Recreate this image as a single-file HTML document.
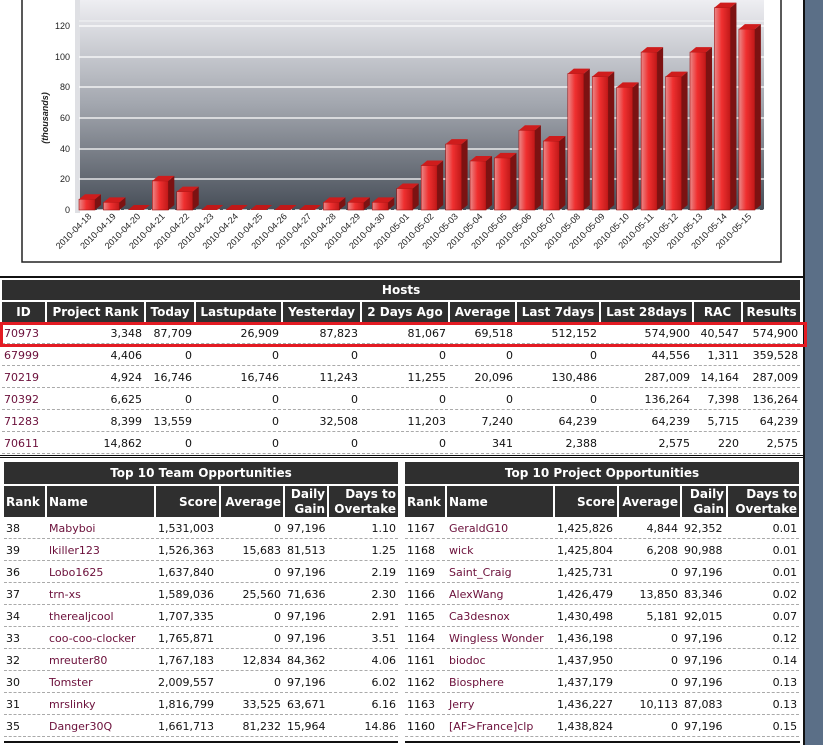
<!DOCTYPE html>
<html><head><meta charset="utf-8"><style>
body{margin:0;width:823px;height:745px;overflow:hidden;background:#fff;font-family:"DejaVu Sans","Liberation Sans",sans-serif;font-size:11px;color:#111;position:relative}
.side{position:absolute;left:803px;top:0;width:20px;height:745px;background:#5b6f87;border-left:2px solid #111}
table{position:absolute;border-collapse:separate;border-spacing:2px;table-layout:fixed}
td,th{padding:0 2px;white-space:nowrap;overflow:hidden}
th{background:#2f2f2f;color:#fff;font-weight:bold;font-size:12px}
td{height:19px;border-bottom:1px dashed #aaa;text-align:right;font-size:11px}
td.l{text-align:left}
a{color:#6b0f3a;text-decoration:none}
.hl{position:absolute;background:#111;height:2px}
</style></head><body>
<div class="side"></div>
<svg width="803" height="272" style="position:absolute;left:0;top:0" font-family="Liberation Sans,sans-serif">
<defs>
<linearGradient id="bg" x1="0" y1="0" x2="0" y2="1"><stop offset="0" stop-color="#eeeef2"/><stop offset="0.5" stop-color="#a2a6ae"/><stop offset="1" stop-color="#474e58"/></linearGradient>
<linearGradient id="fr" x1="0" y1="0" x2="1" y2="0"><stop offset="0" stop-color="#e98a8a"/><stop offset="0.45" stop-color="#f03030"/><stop offset="1" stop-color="#c01818"/></linearGradient>
</defs>
<rect x="22" y="-2" width="759" height="264" fill="#fff" stroke="#222" stroke-width="1.5"/>
<rect x="79" y="0" width="685" height="210" fill="url(#bg)"/>
<rect x="75" y="0" width="5" height="213" fill="#dfe0e4"/>
<g stroke="#fff" stroke-width="1.2">
<line x1="79" y1="21" x2="764" y2="21" stroke-opacity="0.5"/>
<line x1="79" y1="26" x2="764" y2="26"/><line x1="79" y1="57" x2="764" y2="57"/><line x1="79" y1="87" x2="764" y2="87"/><line x1="79" y1="118" x2="764" y2="118"/><line x1="79" y1="149" x2="764" y2="149"/><line x1="79" y1="179" x2="764" y2="179"/><line x1="79" y1="210" x2="764" y2="210" stroke-dasharray="6 3"/>
</g>
<g font-size="9" fill="#222" text-anchor="end">
<text x="70" y="29">120</text><text x="70" y="60">100</text><text x="70" y="90">80</text><text x="70" y="121">60</text><text x="70" y="152">40</text><text x="70" y="182">20</text><text x="70" y="213">0</text>
</g>
<text transform="translate(48,118) rotate(-90)" font-size="9" font-weight="bold" font-style="italic" text-anchor="middle" fill="#222">(thousands)</text>
<g id="bars"></g>
<g id="lbl" font-size="9" fill="#222" text-anchor="end"></g>
</svg>
<script>
var v=[7,5,0,19,12,0,0,0,0,0,5,5,5,14,29,43,32,34,52,45,89,87,80,103,87,103,132,118];
var b='',l='';
for(var i=0;i<28;i++){
 var x=79+i*24.44,h=v[i]*1.533,t=210-h,d=6,u=5;
 if(h<1){b+='<polygon points="'+x+',210 '+(x+16)+',210 '+(x+22)+','+(210-u)+' '+(x+6)+','+(210-u)+'" fill="#c01818"/>';}
 else{
 b+='<rect x="'+x+'" y="'+t+'" width="16" height="'+h+'" fill="url(#fr)" stroke="#a01010" stroke-width="0.6"/>';
 b+='<polygon points="'+(x+16)+','+t+' '+(x+16+d)+','+(t-u)+' '+(x+16+d)+','+(210-u)+' '+(x+16)+',210" fill="#7c1212"/>';
 b+='<polygon points="'+x+','+t+' '+(x+16)+','+t+' '+(x+16+d)+','+(t-u)+' '+(x+d)+','+(t-u)+'" fill="#cf1c1c"/>';}
 var dd=new Date(2010,3,18+i);var s='2010-'+String(dd.getMonth()+1).padStart(2,'0')+'-'+String(dd.getDate()).padStart(2,'0');
 l+='<text transform="translate('+(x+13)+',217) rotate(-45)">'+s+'</text>';
}
document.getElementById('bars').innerHTML=b;document.getElementById('lbl').innerHTML=l;
</script>
<div class="hl" style="left:0;top:276px;width:803px"></div>
<table style="left:0;top:278px;width:802px">
<colgroup><col style="width:43px"><col style="width:97px"><col style="width:48px"><col style="width:85px"><col style="width:77px"><col style="width:86px"><col style="width:65px"><col style="width:82px"><col style="width:91px"><col style="width:47px"><col style="width:57px"></colgroup>
<tr><th colspan="11" style="height:20px">Hosts</th></tr>
<tr><th style="height:20px">ID</th><th>Project Rank</th><th>Today</th><th>Lastupdate</th><th>Yesterday</th><th>2 Days Ago</th><th>Average</th><th>Last 7days</th><th>Last 28days</th><th>RAC</th><th>Results</th></tr>
<tr><td class="l"><a>70973</a></td><td>3,348</td><td>87,709</td><td>26,909</td><td>87,823</td><td>81,067</td><td>69,518</td><td>512,152</td><td>574,900</td><td>40,547</td><td>574,900</td></tr>
<tr><td class="l"><a>67999</a></td><td>4,406</td><td>0</td><td>0</td><td>0</td><td>0</td><td>0</td><td>0</td><td>44,556</td><td>1,311</td><td>359,528</td></tr>
<tr><td class="l"><a>70219</a></td><td>4,924</td><td>16,746</td><td>16,746</td><td>11,243</td><td>11,255</td><td>20,096</td><td>130,486</td><td>287,009</td><td>14,164</td><td>287,009</td></tr>
<tr><td class="l"><a>70392</a></td><td>6,625</td><td>0</td><td>0</td><td>0</td><td>0</td><td>0</td><td>0</td><td>136,264</td><td>7,398</td><td>136,264</td></tr>
<tr><td class="l"><a>71283</a></td><td>8,399</td><td>13,559</td><td>0</td><td>32,508</td><td>11,203</td><td>7,240</td><td>64,239</td><td>64,239</td><td>5,715</td><td>64,239</td></tr>
<tr><td class="l"><a>70611</a></td><td>14,862</td><td>0</td><td>0</td><td>0</td><td>0</td><td>341</td><td>2,388</td><td>2,575</td><td>220</td><td>2,575</td></tr>
</table>
<div style="position:absolute;left:0;top:322px;width:801px;height:19px;border:3px solid #e31b23"></div>
<div class="hl" style="left:0;top:455px;width:803px;height:1px"></div>
<div class="hl" style="left:0;top:457px;width:803px;height:1px"></div>
<table style="left:2px;top:460px;width:398px">
<colgroup><col style="width:41px"><col style="width:107px"><col style="width:63px"><col style="width:62px"><col style="width:42px"><col style="width:69px"></colgroup>
<tr><th colspan="6" style="height:22px">Top 10 Team Opportunities</th></tr>
<tr><th style="height:31px;text-align:left">Rank</th><th style="text-align:left">Name</th><th style="text-align:right">Score</th><th style="text-align:right">Average</th><th style="text-align:right;line-height:15px">Daily<br>Gain</th><th style="text-align:right;line-height:15px">Days to<br>Overtake</th></tr>
<tr><td class="l">38</td><td class="l"><a>Mabyboi</a></td><td class="l">1,531,003</td><td>0</td><td class="l">97,196</td><td>1.10</td></tr>
<tr><td class="l">39</td><td class="l"><a>lkiller123</a></td><td class="l">1,526,363</td><td>15,683</td><td class="l">81,513</td><td>1.25</td></tr>
<tr><td class="l">36</td><td class="l"><a>Lobo1625</a></td><td class="l">1,637,840</td><td>0</td><td class="l">97,196</td><td>2.19</td></tr>
<tr><td class="l">37</td><td class="l"><a>trn-xs</a></td><td class="l">1,589,036</td><td>25,560</td><td class="l">71,636</td><td>2.30</td></tr>
<tr><td class="l">34</td><td class="l"><a>therealjcool</a></td><td class="l">1,707,335</td><td>0</td><td class="l">97,196</td><td>2.91</td></tr>
<tr><td class="l">33</td><td class="l"><a>coo-coo-clocker</a></td><td class="l">1,765,871</td><td>0</td><td class="l">97,196</td><td>3.51</td></tr>
<tr><td class="l">32</td><td class="l"><a>mreuter80</a></td><td class="l">1,767,183</td><td>12,834</td><td class="l">84,362</td><td>4.06</td></tr>
<tr><td class="l">30</td><td class="l"><a>Tomster</a></td><td class="l">2,009,557</td><td>0</td><td class="l">97,196</td><td>6.02</td></tr>
<tr><td class="l">31</td><td class="l"><a>mrslinky</a></td><td class="l">1,816,799</td><td>33,525</td><td class="l">63,671</td><td>6.16</td></tr>
<tr><td class="l">35</td><td class="l"><a>Danger30Q</a></td><td class="l">1,661,713</td><td>81,232</td><td class="l">15,964</td><td>14.86</td></tr>
</table>
<table style="left:403px;top:460px;width:398px">
<colgroup><col style="width:40px"><col style="width:106px"><col style="width:62px"><col style="width:61px"><col style="width:44px"><col style="width:71px"></colgroup>
<tr><th colspan="6" style="height:22px">Top 10 Project Opportunities</th></tr>
<tr><th style="height:31px;text-align:left">Rank</th><th style="text-align:left">Name</th><th style="text-align:right">Score</th><th style="text-align:right">Average</th><th style="text-align:right;line-height:15px">Daily<br>Gain</th><th style="text-align:right;line-height:15px">Days to<br>Overtake</th></tr>
<tr><td class="l">1167</td><td class="l"><a>GeraldG10</a></td><td class="l">1,425,826</td><td>4,844</td><td class="l">92,352</td><td>0.01</td></tr>
<tr><td class="l">1168</td><td class="l"><a>wick</a></td><td class="l">1,425,804</td><td>6,208</td><td class="l">90,988</td><td>0.01</td></tr>
<tr><td class="l">1169</td><td class="l"><a>Saint_Craig</a></td><td class="l">1,425,731</td><td>0</td><td class="l">97,196</td><td>0.01</td></tr>
<tr><td class="l">1166</td><td class="l"><a>AlexWang</a></td><td class="l">1,426,479</td><td>13,850</td><td class="l">83,346</td><td>0.02</td></tr>
<tr><td class="l">1165</td><td class="l"><a>Ca3desnox</a></td><td class="l">1,430,498</td><td>5,181</td><td class="l">92,015</td><td>0.07</td></tr>
<tr><td class="l">1164</td><td class="l"><a>Wingless Wonder</a></td><td class="l">1,436,198</td><td>0</td><td class="l">97,196</td><td>0.12</td></tr>
<tr><td class="l">1161</td><td class="l"><a>biodoc</a></td><td class="l">1,437,950</td><td>0</td><td class="l">97,196</td><td>0.14</td></tr>
<tr><td class="l">1162</td><td class="l"><a>Biosphere</a></td><td class="l">1,437,179</td><td>0</td><td class="l">97,196</td><td>0.13</td></tr>
<tr><td class="l">1163</td><td class="l"><a>Jerry</a></td><td class="l">1,436,227</td><td>10,113</td><td class="l">87,083</td><td>0.13</td></tr>
<tr><td class="l">1160</td><td class="l"><a>[AF&gt;France]clp</a></td><td class="l">1,438,824</td><td>0</td><td class="l">97,196</td><td>0.15</td></tr>
</table>
<div class="hl" style="left:4px;top:741px;width:394px"></div>
<div class="hl" style="left:405px;top:741px;width:395px"></div>
</body></html>
